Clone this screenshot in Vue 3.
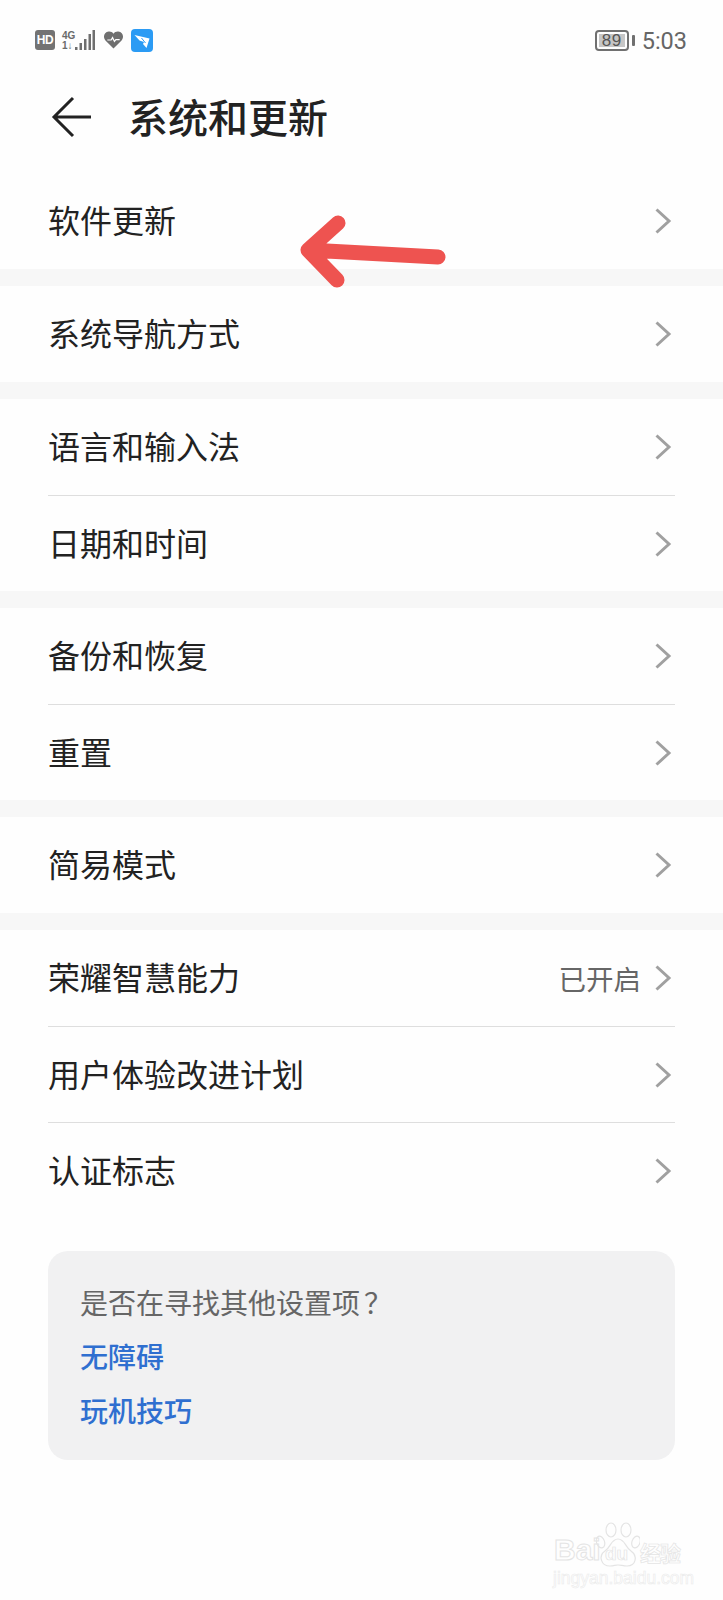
<script setup>
const groups = [
  [{ label: '软件更新' }],
  [{ label: '系统导航方式' }],
  [{ label: '语言和输入法' }, { label: '日期和时间' }],
  [{ label: '备份和恢复' }, { label: '重置' }],
  [{ label: '简易模式' }],
  [{ label: '荣耀智慧能力', value: '已开启' }, { label: '用户体验改进计划' }, { label: '认证标志' }]
]
</script>

<template>
  <div class="page">
    <div class="status">
      <div class="status-left">
        <span class="hd">HD</span>
        <div class="net">
          <div class="net-text"><span>4G</span><span>1↓</span></div>
          <svg class="bars" width="20" height="21" viewBox="0 0 20 21">
            <rect x="0" y="17" width="2.500" height="3" fill="#6f6f6f" />
            <rect x="4.500" y="13" width="2.500" height="7" fill="#6f6f6f" />
            <rect x="9" y="9" width="2.500" height="11" fill="#6f6f6f" />
            <rect x="13.500" y="4" width="2.500" height="16" fill="#6f6f6f" />
            <rect x="17.500" y="0" width="2.500" height="20" fill="#6f6f6f" />
          </svg>
        </div>
        <svg class="heart" width="21" height="18" viewBox="0 0 21 19">
          <path d="M10.500 18.500 L2 10 C-1 6.500 0.500 1 5.500 0.500 C7.500 0.300 9.500 1.200 10.500 3 C11.500 1.200 13.500 0.300 15.500 0.500 C20.500 1 22 6.500 19 10 Z" fill="#6f6f6f" />
          <path d="M4 9.500 H8 L9.500 7 L11.500 11 L13 9 H17" fill="none" stroke="#fff" stroke-width="1.300" />
        </svg>
        <svg class="app" width="22" height="23" viewBox="0 0 22 23">
          <rect width="22" height="23" rx="4" fill="#2b9bf4" />
          <path d="M3.500 6 L18.500 9.500 L15.500 19 L12 15 L13 13 L8.500 11.500 Z" fill="#fff" />
          <path d="M10.500 9 L14.500 14" stroke="#2b9bf4" stroke-width="1" />
        </svg>
      </div>
      <div class="status-right">
        <div class="battery"><span class="battery-level">89</span></div>
        <span class="nub"></span>
        <span class="time">5:03</span>
      </div>
    </div>

    <header class="header">
      <svg class="back" width="42" height="42" viewBox="0 0 42 42">
        <path d="M40 21 H3 M22 2 L3 21 L22 40" fill="none" stroke="#222" stroke-width="3" />
      </svg>
      <h1 class="title">系统和更新</h1>
    </header>

    <section v-for="(group, g) in groups" :key="g" class="group">
      <div v-for="item in group" :key="item.label" class="row">
        <span class="label">{{ item.label }}</span>
        <span v-if="item.value" class="value">{{ item.value }}</span>
        <svg class="chev" width="18" height="26" viewBox="0 0 18 26">
          <path d="M2.500 1.500 L15 13 L2.500 24.500" fill="none" stroke="#a0a0a0" stroke-width="3" />
        </svg>
      </div>
    </section>

    <aside class="card">
      <p class="card-title">是否在寻找其他设置项<span class="q">？</span></p>
      <a class="link">无障碍</a>
      <a class="link">玩机技巧</a>
    </aside>

    <svg class="red-arrow" width="152" height="84" viewBox="0 0 152 84">
      <path d="M141 47 L11 40 M41 13 L11 40 L40 70" fill="none" stroke="#ee5350" stroke-width="15" stroke-linecap="round" stroke-linejoin="round" />
    </svg>

    <div class="watermark">
      <div class="wm-top">
        <span class="wm-bai">Bai</span>
        <svg class="paw" width="44" height="46" viewBox="0 0 44 46">
          <g fill="none" stroke="#e4e4e4" stroke-width="1.200">
            <ellipse cx="4.500" cy="20" rx="4" ry="6" transform="rotate(-20 4.500 20)" />
            <ellipse cx="15" cy="8" rx="5" ry="7" />
            <ellipse cx="30" cy="8" rx="5" ry="7" />
            <ellipse cx="40" cy="20" rx="4" ry="6" transform="rotate(20 40 20)" />
            <path d="M22 17 C15 17 15 25 9 29 C2 34 5 44 14 44 C18 44 19 43 22 43 C25 43 27 44 31 44 C40 44 42 34 35 29 C29 25 29 17 22 17 Z" />
          </g>
        </svg>
        <span class="wm-du">du</span>
        <span class="wm-cn">经验</span>
      </div>
      <div class="wm-url">jingyan.baidu.com</div>
    </div>
  </div>
</template>

<style>
html, body { margin: 0; background: #fff; }
</style>

<style scoped>
.page {
  position: relative;
  width: 723px;
  height: 1600px;
  overflow: hidden;
  background: #fefefe;
  font-family: "Noto Sans CJK SC", "Noto Sans", sans-serif;
  color: #1f1f1f;
}
.status {
  height: 80px;
  box-sizing: border-box;
  padding: 28px 36px 0 35px;
  display: flex;
  justify-content: space-between;
  align-items: flex-start;
}
.status-left { display: flex; align-items: center; height: 24px; }
.hd {
  width: 20px;
  height: 20px;
  border-radius: 3px;
  background: #737373;
  color: #fff;
  font: 700 12px/20px "Liberation Sans", sans-serif;
  text-align: center;
  letter-spacing: -0.5px;
}
.net { display: flex; align-items: flex-end; margin-left: 7px; }
.net-text {
  width: 13px;
  display: flex;
  flex-direction: column;
  color: #6a6a6a;
  font: 700 10px/10px "Liberation Sans", sans-serif;
}
.heart { margin-left: 8px; }
.app { margin-left: 7px; }
.status-right { display: flex; align-items: center; height: 24px; color: #666; }
.battery {
  width: 34px;
  height: 21px;
  box-sizing: border-box;
  border: 2px solid #707070;
  border-radius: 4px;
  padding: 2px;
  display: flex;
}
.battery-level {
  flex: 1;
  background: #c6c6c6;
  font: 400 17px/13px "Liberation Sans", sans-serif;
  letter-spacing: 0.5px;
  text-align: center;
  color: #555;
}
.nub { width: 3px; height: 11px; margin-left: 3px; background: #707070; border-radius: 1px; }
.time { margin: 2px 0 0 7px; font: 400 23.500px/24px Roboto, sans-serif; color: #666; }
.header {
  height: 93px;
  display: flex;
  align-items: flex-start;
  padding: 16px 0 0 51px;
  box-sizing: border-box;
}
.title {
  margin: -9px 0 0 35px;
  font-size: 40px;
  line-height: 58px;
  font-weight: 500;
  color: #222;
}
.group {
  margin-bottom: 17px;
  box-shadow: 0 17px 0 #f7f7f7;
}
.group:nth-of-type(6) { margin-bottom: 0; box-shadow: none; }
.row {
  height: 96px;
  margin: 0 48px;
  display: flex;
  align-items: center;
  box-sizing: border-box;
}
.row + .row { border-top: 1px solid #dedede; }
.label { flex: 1; font-size: 32px; line-height: 44px; padding-bottom: 4px; color: #222; }
.value { font-size: 27.500px; line-height: 40px; color: #666; margin-right: 13px; }
.chev { margin-right: 3px; }
.card {
  margin: 33px 48px 0;
  height: 209px;
  box-sizing: border-box;
  padding: 31px 32px 0;
  background: #f1f1f2;
  border-radius: 20px;
  display: flex;
  flex-direction: column;
  align-items: flex-start;
}
.card-title { margin: 0; font-size: 28px; line-height: 40px; color: #666; }
.q { margin-left: 4px; }
.link { margin-top: 14px; font-size: 28px; line-height: 40px; font-weight: 500; color: #2f6fd0; }
.red-arrow { position: absolute; left: 297px; top: 210px; }
.watermark {
  position: absolute;
  left: 553px;
  top: 1522px;
  width: 135px;
  color: transparent;
}
.wm-top { position: relative; height: 46px; }
.wm-bai {
  position: absolute;
  left: 1px;
  top: 10px;
  font: 700 30px/36px "Liberation Sans", sans-serif;
  -webkit-text-stroke: 1px #e4e4e4;
}
.paw { position: absolute; left: 43px; top: 0; }
.wm-du {
  position: absolute;
  left: 52px;
  top: 21px;
  font: 700 19px/22px "Liberation Sans", sans-serif;
  -webkit-text-stroke: 0.7px #e4e4e4;
}
.wm-cn {
  position: absolute;
  left: 87px;
  top: 15px;
  font-size: 21px;
  line-height: 30px;
  font-weight: 700;
  letter-spacing: -1px;
  white-space: nowrap;
  -webkit-text-stroke: 0.7px #e4e4e4;
}
.wm-url {
  font: 400 17.500px/20px "Liberation Sans", sans-serif;
  white-space: nowrap;
  -webkit-text-stroke: 0.6px #ebebeb;
}
</style>
